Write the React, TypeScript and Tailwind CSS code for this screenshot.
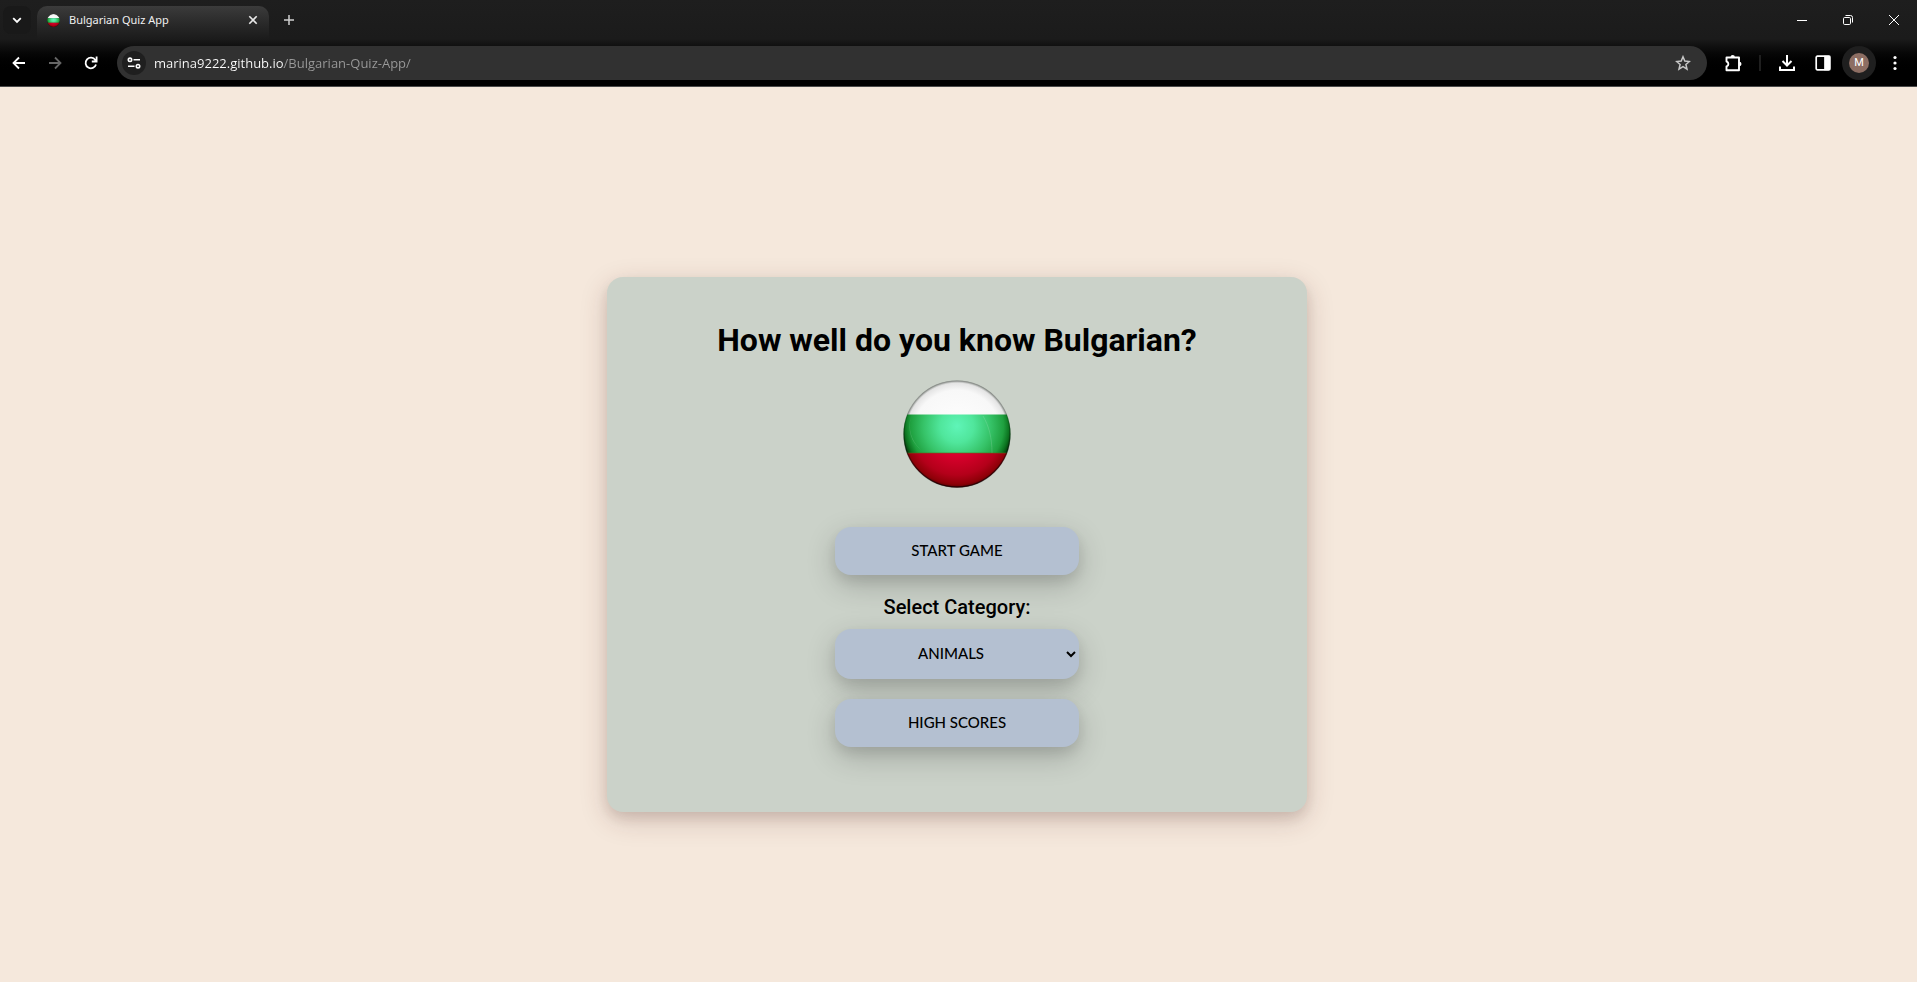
import type { ReactNode } from "react";

const categories = ["Animals", "Colors", "Food", "Numbers"];

function ToolButton({
  label,
  children,
  className = "text-white",
}: {
  label: string;
  children: ReactNode;
  className?: string;
}) {
  return (
    <button
      type="button"
      aria-label={label}
      className={`flex h-9 w-9 shrink-0 items-center justify-center rounded-full ${className}`}
    >
      {children}
    </button>
  );
}

function WindowButton({ label, children }: { label: string; children: ReactNode }) {
  return (
    <button type="button" aria-label={label} className="flex h-10 w-[46px] items-center justify-center text-white">
      {children}
    </button>
  );
}

function Flag({ id, className }: { id: string; className: string }) {
  return (
    <svg viewBox="0 0 108 108" className={className} role="img" aria-label="Bulgarian flag">
      <defs>
        <clipPath id={`${id}-clip`}>
          <circle cx="54" cy="54" r="53.500" />
        </clipPath>
        <radialGradient id={`${id}-white`} gradientUnits="userSpaceOnUse" cx="54" cy="54" r="53.500">
          <stop offset="0" stopColor="#ffffff" />
          <stop offset="0.82" stopColor="#f8f8f8" />
          <stop offset="0.95" stopColor="#e4e4e4" />
          <stop offset="1" stopColor="#8f948f" />
        </radialGradient>
        <radialGradient id={`${id}-green`} gradientUnits="userSpaceOnUse" cx="54" cy="46" r="56">
          <stop offset="0" stopColor="#5ff5b8" />
          <stop offset="0.3" stopColor="#50e69c" />
          <stop offset="0.6" stopColor="#36c368" />
          <stop offset="0.83" stopColor="#1fa03f" />
          <stop offset="0.93" stopColor="#0c7420" />
          <stop offset="1" stopColor="#053a0c" />
        </radialGradient>
        <radialGradient id={`${id}-red`} gradientUnits="userSpaceOnUse" cx="54" cy="50" r="60">
          <stop offset="0" stopColor="#e60035" />
          <stop offset="0.4" stopColor="#dc002e" />
          <stop offset="0.75" stopColor="#b4001a" />
          <stop offset="0.9" stopColor="#8e0008" />
          <stop offset="1" stopColor="#3c0000" />
        </radialGradient>
        <linearGradient id={`${id}-edge`} x1="0" y1="0" x2="0" y2="1">
          <stop offset="0.3" stopColor="#000000" stopOpacity="0.1" />
          <stop offset="1" stopColor="#000000" stopOpacity="0.6" />
        </linearGradient>
      </defs>
      <g clipPath={`url(#${id}-clip)`}>
        <rect width="108" height="35" fill={`url(#${id}-white)`} />
        <rect y="34.500" width="108" height="39" fill={`url(#${id}-green)`} />
        <rect y="73" width="108" height="35" fill={`url(#${id}-red)`} />
        <rect y="72.500" width="108" height="1" fill="#5a6a20" opacity="0.6" />
        <path d="M8 36c-3 14 0 24 10 34C8 62 4 50 8 36z" fill="#ffffff" opacity="0.15" />
        <path d="M80 36c6 10 9 22 9 37" stroke="#ffffff" strokeWidth="1" fill="none" opacity="0.14" />
      </g>
      <circle cx="54" cy="54" r="53" fill="none" stroke={`url(#${id}-edge)`} strokeWidth="1.500" />
    </svg>
  );
}

function BrowserBar() {
  return (
    <header className="border-b border-[#4a4a4a] bg-linear-to-b from-[#1e1e1e] via-[#1b1b1b] via-45% to-black to-85% font-['Open_Sans','Noto_Sans',sans-serif]">
      <div className="flex h-10 items-start justify-between">
        <div className="flex h-10 items-center">
          <button
            type="button"
            aria-label="Search tabs"
            className="mx-[3px] flex h-7 w-7 items-center justify-center rounded-lg bg-[#191919] text-white"
          >
            <svg viewBox="0 0 10 10" className="h-2.5 w-2.5" fill="none" stroke="currentColor" strokeWidth="1.800">
              <path d="M1.200 3.200 5 7l3.800-3.800" />
            </svg>
          </button>
          <div className="ml-[3px] flex h-[34px] w-[232px] items-center self-end rounded-t-[10px] bg-linear-to-b from-[#3b3b3b] to-[#1a1a1a] pr-2 pb-1.5 pl-2.5">
            <Flag id="tab" className="h-[13px] w-[13px]" />
            <span className="ml-[9px] flex-1 font-['Noto_Sans',sans-serif] text-[11px] leading-4 text-[#f0f0f0]">
              Bulgarian Quiz App
            </span>
            <button type="button" aria-label="Close tab" className="flex h-4 w-4 items-center justify-center text-[#e8e8e8]">
              <svg viewBox="0 0 10 10" className="h-2.5 w-2.5" fill="none" stroke="currentColor" strokeWidth="1.600">
                <path d="m1.300 1.300 7.400 7.400m0-7.400L1.300 8.700" />
              </svg>
            </button>
          </div>
          <button
            type="button"
            aria-label="New tab"
            className="ml-1.5 flex h-7 w-7 items-center justify-center rounded-full text-[#cfcfcf]"
          >
            <svg viewBox="0 0 10 10" className="h-2.5 w-2.5" fill="none" stroke="currentColor" strokeWidth="1.500">
              <path d="M5 0v10M0 5h10" />
            </svg>
          </button>
        </div>
        <div className="flex">
          <WindowButton label="Minimize">
            <svg viewBox="0 0 10 10" className="h-2.5 w-2.5" stroke="currentColor">
              <path d="M0 5.500h10" />
            </svg>
          </WindowButton>
          <WindowButton label="Restore">
            <svg viewBox="0 0 10 10" className="h-2.5 w-2.5" fill="none" stroke="currentColor">
              <rect x="0.500" y="2.500" width="7" height="7" rx="1.200" />
              <path d="M2.500.500h5a2 2 0 0 1 2 2v5" />
            </svg>
          </WindowButton>
          <WindowButton label="Close">
            <svg viewBox="0 0 10 10" className="h-2.5 w-2.5" stroke="currentColor">
              <path d="m0 0 10 10M10 0 0 10" />
            </svg>
          </WindowButton>
        </div>
      </div>

      <div className="flex h-[46px] items-center pr-1 pl-px">
        <ToolButton label="Back">
          <svg viewBox="0 0 16 16" className="h-4 w-4" fill="none" stroke="currentColor" strokeWidth="1.800">
            <path d="M14 8H3M8 2.500 2.500 8 8 13.500" />
          </svg>
        </ToolButton>
        <ToolButton label="Forward" className="text-[#666666]">
          <svg viewBox="0 0 16 16" className="h-4 w-4" fill="none" stroke="currentColor" strokeWidth="1.800">
            <path d="M2 8h11M8 2.500 13.500 8 8 13.500" />
          </svg>
        </ToolButton>
        <ToolButton label="Reload">
          <svg viewBox="0 0 16 16" className="h-4 w-4" fill="none" stroke="currentColor" strokeWidth="1.800">
            <path d="M13 9.500A5.300 5.300 0 1 1 12.300 5L13.500 6.300M13.600 1.500v5H8.800" />
          </svg>
        </ToolButton>
        <div className="ml-2 flex h-[34px] flex-1 items-center rounded-full bg-[#313131] pr-1.5 pl-[5px]">
          <button
            type="button"
            aria-label="View site information"
            className="flex h-6 w-6 shrink-0 items-center justify-center rounded-full bg-[#1f1f1f] text-white"
          >
            <svg viewBox="0 0 14 12" className="h-3 w-3.5" fill="none" stroke="currentColor" strokeWidth="1.600">
              <circle cx="3" cy="2.800" r="1.700" />
              <path d="M6.500 2.800H13M1 9.200h6.500" />
              <circle cx="11" cy="9.200" r="1.700" />
            </svg>
          </button>
          <input
            type="text"
            aria-label="Address"
            defaultValue="marina9222.github.io/Bulgarian-Quiz-App/"
            className="ml-2 min-w-0 flex-1 bg-linear-to-r from-white from-[130px] to-[#9a9a9a] to-[130px] bg-clip-text text-[13px] leading-5 text-transparent outline-none"
          />
          <ToolButton label="Bookmark this tab" className="text-[#c7c7c7]">
            <svg viewBox="0 0 16 16" className="h-4 w-4" fill="none" stroke="currentColor" strokeWidth="1.500">
              <path d="m8 1.800 1.800 4.300 4.600.400-3.500 3 1.100 4.600L8 11.700l-4 2.400 1.100-4.600-3.500-3 4.600-.400z" />
            </svg>
          </ToolButton>
        </div>
        <ToolButton label="Extensions" className="ml-2 text-white">
          <svg viewBox="0 0 18 18" className="h-[18px] w-[18px]" fill="none" stroke="currentColor" strokeWidth="1.900">
            <path d="M2.500 3.500H15V16.200H2.500V12.500a2.600 2.600 0 0 0 0-5z" strokeLinejoin="round" />
            <path d="M6.500 3.200a2.200 2.200 0 0 1 4.400 0zM15.300 7.700a2.200 2.200 0 0 1 0 4.400z" fill="currentColor" stroke="none" />
          </svg>
        </ToolButton>
        <span className="mx-2 h-4 w-0.5 bg-[#1f1f1f]" />
        <ToolButton label="Downloads">
          <svg viewBox="0 0 18 18" className="h-[18px] w-[18px]" fill="none" stroke="currentColor" strokeWidth="2">
            <path d="M9 1v10M4.500 7 9 11.500 13.500 7M2 12.500V16h14v-3.500" />
          </svg>
        </ToolButton>
        <ToolButton label="Side panel">
          <svg viewBox="0 0 16 16" className="h-4 w-4" fill="none" stroke="currentColor" strokeWidth="1.700">
            <rect x="1.200" y="1.200" width="13.600" height="13.600" rx="1.200" />
            <path d="M10 1.500h4.500v13H10z" fill="currentColor" />
          </svg>
        </ToolButton>
        <ToolButton label="Profile">
          <span className="flex h-[34px] w-[34px] items-center justify-center rounded-full bg-[#1f1f1f]">
            <span className="flex h-5 w-5 items-center justify-center rounded-full bg-[#8d6e63] font-[Roboto,sans-serif] text-[11px] leading-4">
              M
            </span>
          </span>
        </ToolButton>
        <ToolButton label="Menu">
          <svg viewBox="0 0 16 16" className="h-4 w-4" fill="currentColor">
            <circle cx="8" cy="2.500" r="1.600" />
            <circle cx="8" cy="8" r="1.600" />
            <circle cx="8" cy="13.500" r="1.600" />
          </svg>
        </ToolButton>
      </div>
    </header>
  );
}

const control =
  "w-[244px] rounded-2xl bg-[#b4c0d1] pb-0.5 text-center font-[Lato,sans-serif] text-[15px] leading-5 font-medium text-black uppercase shadow-[0_10px_30px_rgba(0,0,0,0.2),0_6px_12px_rgba(0,0,0,0.08)]";

export default function App() {
  return (
    <div className="flex min-h-screen flex-col bg-[#f5e8dc]">
      <BrowserBar />
      <main className="flex flex-1 items-center justify-center pt-5 pr-[3px]">
        <section className="flex w-full max-w-[700px] flex-col items-center rounded-2xl bg-[#cbd2c9] pt-[43px] pb-[65px] font-[Roboto,sans-serif] text-black shadow-[0_8px_28px_rgba(80,30,30,0.2),0_6px_12px_rgba(50,30,20,0.1)]">
          <h1 className="text-[32px] leading-10 font-bold">How well do you know Bulgarian?</h1>
          <Flag id="hero" className="mt-5 h-[108px] w-[108px]" />
          <button type="button" className={`mt-[39px] h-12 ${control}`}>
            Start Game
          </button>
          <label htmlFor="category" className="mt-5 mb-2.5 text-xl leading-6 font-medium">
            Select Category:
          </label>
          <select id="category" className={`h-[50px] ${control}`}>
            {categories.map((name) => (
              <option key={name}>{name}</option>
            ))}
          </select>
          <button type="button" className={`mt-5 h-12 ${control}`}>
            High Scores
          </button>
        </section>
      </main>
    </div>
  );
}
